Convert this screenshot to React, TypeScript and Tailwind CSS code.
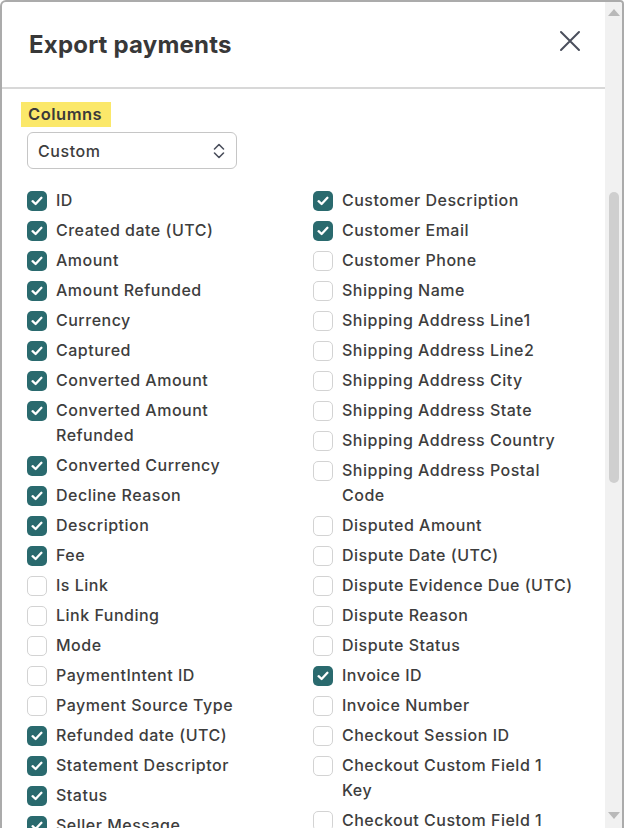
import React from "react";

type Item = { label: string; checked: boolean };

const left: Item[] = [
  { label: "ID", checked: true },
  { label: "Created date (UTC)", checked: true },
  { label: "Amount", checked: true },
  { label: "Amount Refunded", checked: true },
  { label: "Currency", checked: true },
  { label: "Captured", checked: true },
  { label: "Converted Amount", checked: true },
  { label: "Converted Amount Refunded", checked: true },
  { label: "Converted Currency", checked: true },
  { label: "Decline Reason", checked: true },
  { label: "Description", checked: true },
  { label: "Fee", checked: true },
  { label: "Is Link", checked: false },
  { label: "Link Funding", checked: false },
  { label: "Mode", checked: false },
  { label: "PaymentIntent ID", checked: false },
  { label: "Payment Source Type", checked: false },
  { label: "Refunded date (UTC)", checked: true },
  { label: "Statement Descriptor", checked: true },
  { label: "Status", checked: true },
  { label: "Seller Message", checked: true },
];

const right: Item[] = [
  { label: "Customer Description", checked: true },
  { label: "Customer Email", checked: true },
  { label: "Customer Phone", checked: false },
  { label: "Shipping Name", checked: false },
  { label: "Shipping Address Line1", checked: false },
  { label: "Shipping Address Line2", checked: false },
  { label: "Shipping Address City", checked: false },
  { label: "Shipping Address State", checked: false },
  { label: "Shipping Address Country", checked: false },
  { label: "Shipping Address Postal Code", checked: false },
  { label: "Disputed Amount", checked: false },
  { label: "Dispute Date (UTC)", checked: false },
  { label: "Dispute Evidence Due (UTC)", checked: false },
  { label: "Dispute Reason", checked: false },
  { label: "Dispute Status", checked: false },
  { label: "Invoice ID", checked: true },
  { label: "Invoice Number", checked: false },
  { label: "Checkout Session ID", checked: false },
  { label: "Checkout Custom Field 1 Key", checked: false },
  { label: "Checkout Custom Field 1 Value", checked: false },
];

function Box({ checked }: { checked: boolean }) {
  if (checked) {
    return (
      <span className="mt-[3px] flex h-[20px] w-[20px] shrink-0 items-center justify-center rounded-[5px] bg-[#2a6a6e]">
        <svg width="12" height="10" viewBox="0 0 12 10" fill="none">
          <path d="M1.6 5.2 L4.6 8 L10.4 1.8" stroke="white" strokeWidth="2.3" strokeLinecap="round" strokeLinejoin="round" />
        </svg>
      </span>
    );
  }
  return <span className="mt-[3px] h-[20px] w-[20px] shrink-0 rounded-[5px] border border-[#d3d3d3] bg-white" />;
}

function Row({ item, w }: { item: Item; w: string }) {
  return (
    <div className="flex items-start gap-[9px]">
      <Box checked={item.checked} />
      <span className={`${w} text-[16px] font-medium leading-[25px] tracking-[0.5px] text-[#3d3d3d]`}>{item.label}</span>
    </div>
  );
}

export default function App() {
  return (
    <div
      className="h-[828px] w-[624px] overflow-hidden bg-white"
      style={{ fontFamily: "Inter, 'Noto Sans', sans-serif" }}
    >
      <div className="flex h-[828px] w-[624px] overflow-hidden rounded-tl-[6px] rounded-tr-[4px] border-l-2 border-r-2 border-t-2 border-[#ababab] bg-white">
        <div className="flex min-w-0 flex-1 flex-col">
          <div className="flex h-[85px] shrink-0 items-center justify-between pl-[27px] pr-[24px]">
            <h1 className="text-[24px] font-bold leading-[32px] tracking-[0.2px] text-[#383838]">Export payments</h1>
            <svg width="22" height="22" viewBox="0 0 22 22" fill="none" className="mb-[7px]">
              <path d="M2 2 L20 20 M20 2 L2 20" stroke="#4a4f5c" strokeWidth="2" strokeLinecap="round" />
            </svg>
          </div>
          <div className="h-[2px] shrink-0 bg-[#d8d8d8]" />
          <div className="flex flex-col px-[25px] pt-[13px]">
            <div className="self-start -ml-[6px] bg-[#fbe86a] pl-[7px] pr-[9px] text-[16.5px] font-semibold leading-[25px] tracking-[0.5px] text-[#3a3a3a]">
              Columns
            </div>
            <div className="mt-[5px] flex h-[37px] w-[210px] items-center justify-between rounded-[6px] border border-[#c6c6c6] bg-white pl-[10px] pr-[11px]">
              <span className="text-[16px] font-medium tracking-[0.55px] text-[#3d3d3d]">Custom</span>
              <svg width="12" height="16" viewBox="0 0 12 16" fill="none">
                <path d="M1.5 6 L6 1.5 L10.5 6 M1.5 10 L6 14.5 L10.5 10" stroke="#4a4f5c" strokeWidth="1.6" strokeLinecap="round" strokeLinejoin="round" />
              </svg>
            </div>
            <div className="mt-[19px] grid grid-cols-[286px_1fr]">
              <div className="flex flex-col gap-[5px]">
                {left.map((it) => (
                  <Row key={it.label} item={it} w="max-w-[200px]" />
                ))}
              </div>
              <div className="flex flex-col gap-[5px]">
                {right.map((it) => (
                  <Row key={it.label} item={it} w="max-w-[232px]" />
                ))}
              </div>
            </div>
          </div>
        </div>
        <div className="flex w-[17px] shrink-0 flex-col items-center bg-[#f1f1f1]">
          <div className="flex h-[18px] w-full items-center justify-center pt-[2px]">
            <div className="h-0 w-0 border-x-[6px] border-b-[7px] border-x-transparent border-b-[#b9b9b9]" />
          </div>
          <div className="flex w-full flex-1 flex-col items-center">
            <div className="mt-[172px] h-[291px] w-[10px] rounded-full bg-[#cfcfcf]" />
          </div>
          <div className="flex h-[20px] w-full items-start justify-center pt-[4px]">
            <div className="h-0 w-0 border-x-[6px] border-t-[7px] border-x-transparent border-t-[#b9b9b9]" />
          </div>
        </div>
      </div>
    </div>
  );
}
